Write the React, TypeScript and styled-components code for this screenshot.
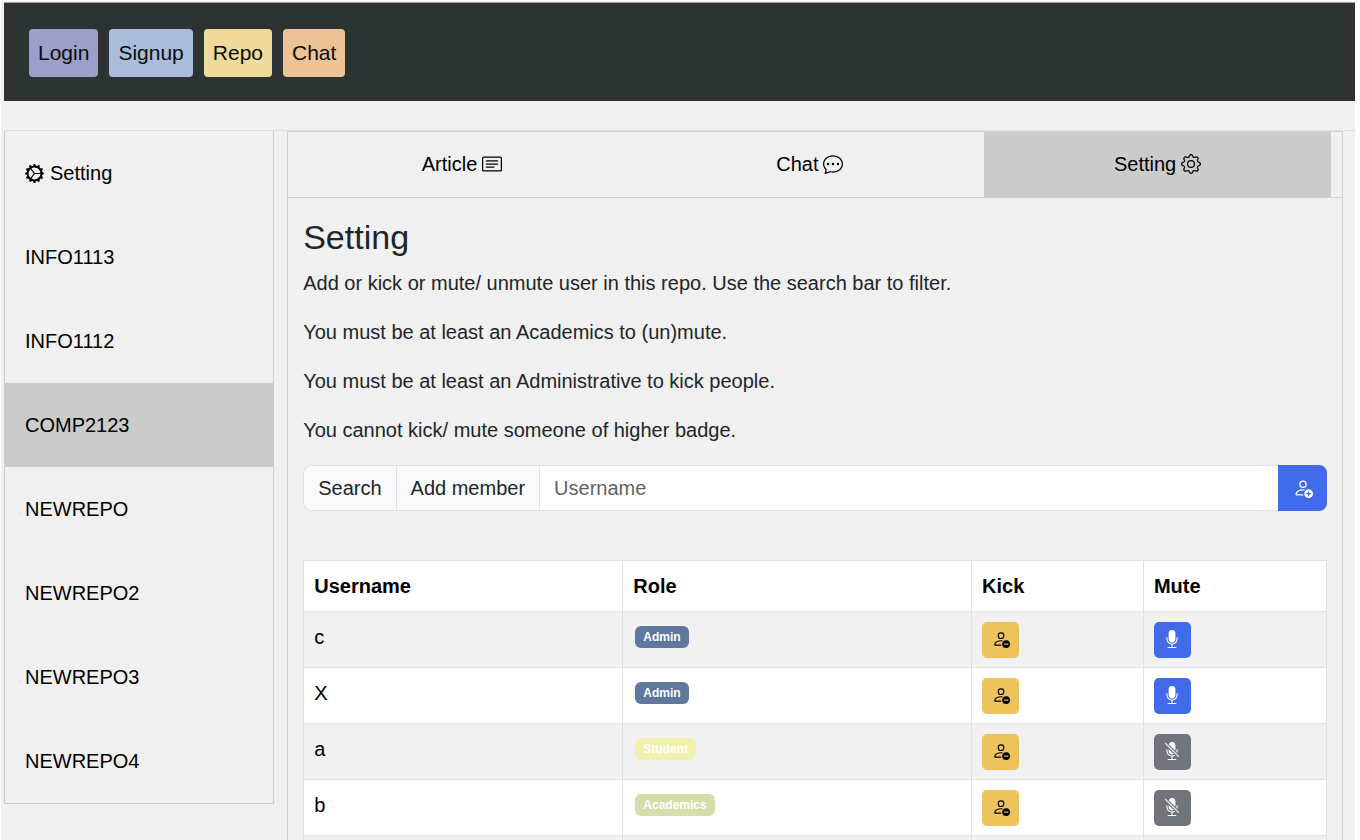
import React from "react";
import styled, { createGlobalStyle } from "styled-components";
import {
  BsCardText,
  BsChatDots,
  BsGear,
  BsGearWideConnected,
  BsMicFill,
  BsMicMuteFill,
  BsPersonAdd,
  BsPersonDash,
} from "react-icons/bs";

const GlobalStyle = createGlobalStyle`
  *, *::before, *::after { box-sizing: border-box; }
  body {
    margin: 0;
    background: #fff;
    color: #212529;
    font-family: "Liberation Sans", Arial, sans-serif;
    font-size: 20px;
    line-height: 30px;
  }
  button, input { font: inherit; }
  a { color: #000; text-decoration: none; }
`;

const Page = styled.div`
  height: 100vh;
  overflow: hidden;
  padding: 1px 5px 0 3px;
  border-left: 1px solid #fff;
  border-top: 1px solid #fff;
  background: linear-gradient(to left, #fff 5px, #f0f0f0 5px);
`;

const TopBar = styled.header`
  display: flex;
  gap: 11px;
  padding: 26px 25px 24px;
  border-top: 1px solid #a9acac;
  background: #2d3232;
`;

const TopButton = styled.button<{ $color: string }>`
  height: 48px;
  padding: 0 9px;
  border: 0;
  border-radius: 4px;
  background: ${(p) => p.$color};
  color: #0b0b0b;
  font-size: 21px;
`;

const Columns = styled.div`
  display: grid;
  grid-template-columns: 20% minmax(0, 1fr);
  align-items: start;
  column-gap: 13px;
  margin-top: 29px;
  border-top: 1px solid #dedede;
`;

const Sidebar = styled.nav`
  border: 1px solid #ccc;
  border-top: 0;
`;

const SideLink = styled.a<{ $active?: boolean }>`
  display: flex;
  align-items: center;
  gap: 6px;
  height: 84px;
  padding: 0 20px;
  background: ${(p) => (p.$active ? "#cbcbcb" : "transparent")};
`;

const Panel = styled.main`
  margin-right: 12px;
  border: 1px solid #d0d0d0;
`;

const Tabs = styled.nav`
  display: flex;
  border-bottom: 1px solid #d0d0d0;
`;

const Tab = styled.a<{ $active?: boolean }>`
  display: flex;
  flex: 0 0 33%;
  align-items: center;
  justify-content: center;
  gap: 5px;
  height: 65px;
  padding-bottom: 1px;
  background: ${(p) => (p.$active ? "#cbcbcb" : "transparent")};
`;

const Content = styled.div`
  padding: 15px;
`;

const Title = styled.h2`
  margin: 0 0 7px;
  font-size: 34px;
  font-weight: 400;
  line-height: 48px;
`;

const Note = styled.p`
  margin: 0 0 19px;
`;

const SearchGroup = styled.form`
  display: flex;
  height: 46px;
  margin: 20px 0 49px;
  border-radius: 8px;
  overflow: hidden;
`;

const GroupButton = styled.button`
  padding: 0 14px;
  border: 1px solid #dee2e6;
  border-right: 0;
  background: #f8f9fb;
  color: #212529;

  &:first-child { border-radius: 8px 0 0 8px; }
`;

const UserInput = styled.input`
  flex: 1;
  min-width: 0;
  padding: 0 14px;
  border: 1px solid #dee2e6;
  border-right: 0;
  border-radius: 0;
  outline: 0;

  &::placeholder { color: #5f6265; opacity: 1; }
`;

const SubmitButton = styled.button`
  display: grid;
  place-items: center;
  width: 49px;
  padding: 0;
  border: 0;
  background: #416beb;
  color: #fff;
`;

const Members = styled.table`
  width: 100%;
  border-collapse: collapse;
  table-layout: fixed;
  color: #000;

  th, td {
    padding: 10px;
    border: 1px solid #dee2e6;
    text-align: left;
    vertical-align: top;
  }
  td {
    height: 56px;
    padding-bottom: 9px;
  }
  thead tr, tbody tr:nth-child(even) { background: #fff; }
  tbody tr:nth-child(odd) { background: #f1f1f1; }
`;

const Column = styled.col<{ $share: number }>`
  width: ${(p) => p.$share}%;
`;

const Badge = styled.span<{ $color: string }>`
  display: block;
  width: fit-content;
  margin: 4px 2px;
  padding: 0 8px;
  border-radius: 6px;
  background: ${(p) => p.$color};
  color: #fff;
  font-size: 12px;
  font-weight: 700;
  line-height: 22px;
`;

const ActionButton = styled.button<{ $color: string; $ink: string }>`
  display: grid;
  place-items: center;
  width: 37px;
  height: 36px;
  padding: 0 0 2px;
  border: 0;
  border-radius: 5px;
  background: ${(p) => p.$color};
  color: ${(p) => p.$ink};
`;

const repos = ["INFO1113", "INFO1112", "COMP2123", "NEWREPO", "NEWREPO2", "NEWREPO3", "NEWREPO4"];

const topButtons = [
  { label: "Login", color: "#9c9fc9" },
  { label: "Signup", color: "#a9bddb" },
  { label: "Repo", color: "#eedb99" },
  { label: "Chat", color: "#edc395" },
];

const notes = [
  "Add or kick or mute/ unmute user in this repo. Use the search bar to filter.",
  "You must be at least an Academics to (un)mute.",
  "You must be at least an Administrative to kick people.",
  "You cannot kick/ mute someone of higher badge.",
];

const roleColors = { Admin: "#5f789b", Student: "#f2f1ab", Academics: "#d1dfab" };

const members: { name: string; role: keyof typeof roleColors; muted: boolean }[] = [
  { name: "c", role: "Admin", muted: false },
  { name: "X", role: "Admin", muted: false },
  { name: "a", role: "Student", muted: true },
  { name: "b", role: "Academics", muted: true },
];

export default function App() {
  return (
    <>
      <GlobalStyle />
      <Page>
        <TopBar>
          {topButtons.map((b) => (
            <TopButton key={b.label} type="button" $color={b.color}>{b.label}</TopButton>
          ))}
        </TopBar>
        <Columns>
          <Sidebar aria-label="Repositories">
            <SideLink href="#settings"><BsGearWideConnected size={19} />Setting</SideLink>
            {repos.map((repo) => (
              <SideLink key={repo} href={`#${repo}`} $active={repo === "COMP2123"}>{repo}</SideLink>
            ))}
          </Sidebar>
          <Panel>
            <Tabs aria-label="Repository sections">
              <Tab href="#article">Article<BsCardText size={20} /></Tab>
              <Tab href="#chat">Chat<BsChatDots size={20} /></Tab>
              <Tab href="#setting" $active>Setting<BsGear size={20} /></Tab>
            </Tabs>
            <Content>
              <Title>Setting</Title>
              {notes.map((note) => <Note key={note}>{note}</Note>)}
              <SearchGroup onSubmit={(e) => e.preventDefault()}>
                <GroupButton type="button">Search</GroupButton>
                <GroupButton type="button">Add member</GroupButton>
                <UserInput type="text" placeholder="Username" aria-label="Username" />
                <SubmitButton type="submit" aria-label="Add user"><BsPersonAdd size={20} /></SubmitButton>
              </SearchGroup>
              <Members>
                <colgroup>
                  <Column $share={31.2} />
                  <Column $share={34.1} />
                  <Column $share={16.8} />
                  <Column $share={17.9} />
                </colgroup>
                <thead>
                  <tr>
                    <th scope="col">Username</th>
                    <th scope="col">Role</th>
                    <th scope="col">Kick</th>
                    <th scope="col">Mute</th>
                  </tr>
                </thead>
                <tbody>
                  {members.map((m) => (
                    <tr key={m.name}>
                      <td>{m.name}</td>
                      <td><Badge $color={roleColors[m.role]}>{m.role}</Badge></td>
                      <td>
                        <ActionButton type="button" aria-label={`Kick ${m.name}`} $color="#ecc35b" $ink="#000">
                          <BsPersonDash size={18} />
                        </ActionButton>
                      </td>
                      <td>
                        <ActionButton
                          type="button"
                          aria-label={`${m.muted ? "Unmute" : "Mute"} ${m.name}`}
                          $color={m.muted ? "#6f747d" : "#416beb"}
                          $ink="#fff"
                        >
                          {m.muted ? <BsMicMuteFill size={18} /> : <BsMicFill size={18} />}
                        </ActionButton>
                      </td>
                    </tr>
                  ))}
                  <tr><td /><td /><td /><td /></tr>
                </tbody>
              </Members>
            </Content>
          </Panel>
        </Columns>
      </Page>
    </>
  );
}
